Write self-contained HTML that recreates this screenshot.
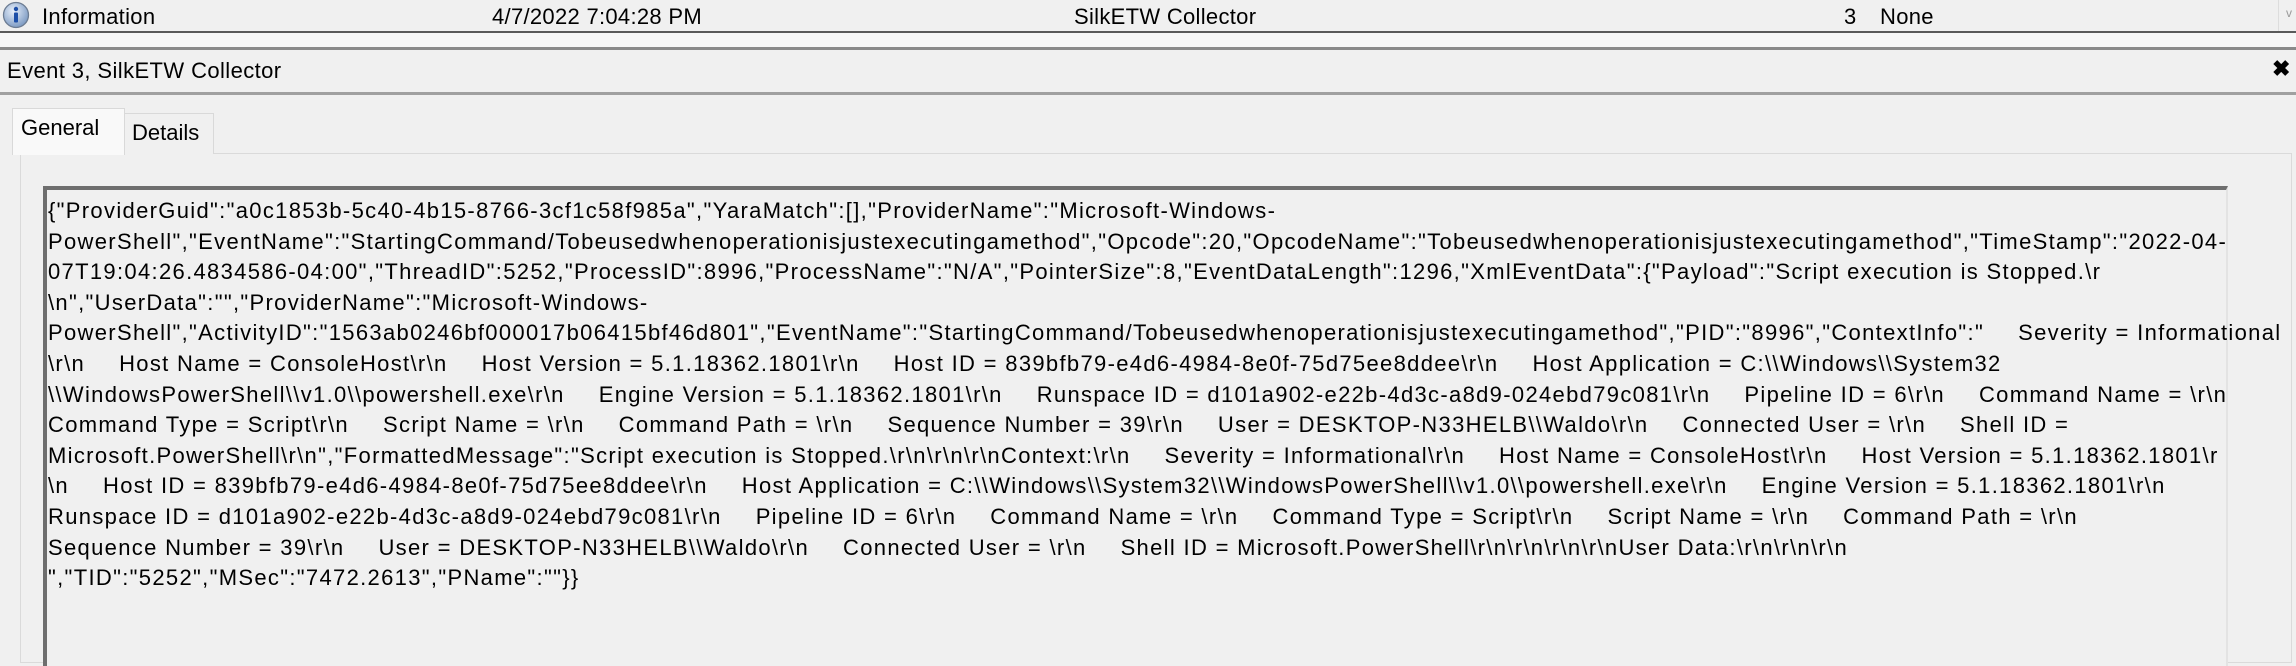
<!DOCTYPE html>
<html><head><meta charset="utf-8"><style>
*{margin:0;padding:0;box-sizing:border-box}
body{width:2296px;height:654px;overflow:hidden;background:#f0f0f0;font-family:"Liberation Sans",sans-serif;color:#000;position:relative}
.abs{position:absolute}
.row{left:0;top:0;width:2296px;height:32px;background:#f0f0f0}
.t{position:absolute;font-size:22px;white-space:nowrap;top:4px;letter-spacing:0.3px}
.txt{position:absolute;left:48px;top:196px;font-size:22px;line-height:30.6px;white-space:pre;letter-spacing:1.32px}
i{display:inline-block;width:34px}
</style></head><body>
<div class="abs row">
<svg class="abs" style="left:2px;top:1px" width="28" height="28" viewBox="0 0 28 28"><defs><radialGradient id="g" cx="40%" cy="35%" r="65%"><stop offset="0" stop-color="#e8f0fb"/><stop offset="1" stop-color="#7f9cc4"/></radialGradient></defs><circle cx="14" cy="14" r="12.5" fill="url(#g)" stroke="#6c7c92" stroke-width="1.3"/><circle cx="14" cy="8" r="2.2" fill="#1d4fa8"/><rect x="12" y="11.5" width="4" height="10" rx="1" fill="#1d4fa8"/></svg>
<div class="t" style="left:42px">Information</div>
<div class="t" style="left:492px">4/7/2022 7:04:28 PM</div>
<div class="t" style="left:1074px">SilkETW Collector</div>
<div class="t" style="left:1844px">3</div>
<div class="t" style="left:1880px">None</div>
<div class="abs" style="left:2278px;top:0;width:18px;height:32px;background:#f0f0f0;border-left:1px solid #ddd"></div>
<div class="abs" style="left:2286px;top:6px;font-size:12px;color:#999">v</div>
</div>
<div class="abs" style="left:0;top:31px;width:2296px;height:2px;background:#5a5a5a"></div>
<div class="abs" style="left:0;top:33px;width:2296px;height:14px;background:#f7f7f7"></div>
<div class="abs" style="left:0;top:47px;width:2296px;height:3px;background:#8a8a8a"></div>
<div class="abs" style="left:7px;top:58px;font-size:22px;letter-spacing:0.4px;white-space:nowrap">Event 3, SilkETW Collector</div>
<div class="abs" style="left:2272px;top:56px;font-size:22px;font-weight:bold">✖</div>
<div class="abs" style="left:0;top:92px;width:2296px;height:3px;background:#a0a0a0"></div>
<div class="abs" style="left:20px;top:153px;width:2272px;height:510px;border:1px solid #dadada;background:#f0f0f0"></div>
<div class="abs" style="left:124px;top:113px;width:90px;height:41px;border:1px solid #d9d9d9;border-bottom:none;background:#f0f0f0"></div>
<div class="abs" style="left:132px;top:120px;font-size:22px">Details</div>
<div class="abs" style="left:12px;top:108px;width:113px;height:47px;border:1px solid #d9d9d9;border-bottom:none;background:#f9f9f9"></div>
<div class="abs" style="left:21px;top:115px;font-size:22px">General</div>
<div class="abs" style="left:43px;top:186px;width:2185px;height:480px;border-top:4px solid #6e6e6e;border-left:4px solid #6e6e6e;border-right:2px solid #e3e3e3;background:#f0f0f0"></div>
<div class="txt">{"ProviderGuid":"a0c1853b-5c40-4b15-8766-3cf1c58f985a","YaraMatch":[],"ProviderName":"Microsoft-Windows-
PowerShell","EventName":"StartingCommand/Tobeusedwhenoperationisjustexecutingamethod","Opcode":20,"OpcodeName":"Tobeusedwhenoperationisjustexecutingamethod","TimeStamp":"2022-04-
07T19:04:26.4834586-04:00","ThreadID":5252,"ProcessID":8996,"ProcessName":"N/A","PointerSize":8,"EventDataLength":1296,"XmlEventData":{"Payload":"Script execution is Stopped.\r
\n","UserData":"","ProviderName":"Microsoft-Windows-
PowerShell","ActivityID":"1563ab0246bf000017b06415bf46d801","EventName":"StartingCommand/Tobeusedwhenoperationisjustexecutingamethod","PID":"8996","ContextInfo":"<i></i>Severity = Informational
\r\n<i></i>Host Name = ConsoleHost\r\n<i></i>Host Version = 5.1.18362.1801\r\n<i></i>Host ID = 839bfb79-e4d6-4984-8e0f-75d75ee8ddee\r\n<i></i>Host Application = C:\\Windows\\System32
\\WindowsPowerShell\\v1.0\\powershell.exe\r\n<i></i>Engine Version = 5.1.18362.1801\r\n<i></i>Runspace ID = d101a902-e22b-4d3c-a8d9-024ebd79c081\r\n<i></i>Pipeline ID = 6\r\n<i></i>Command Name = \r\n
Command Type = Script\r\n<i></i>Script Name = \r\n<i></i>Command Path = \r\n<i></i>Sequence Number = 39\r\n<i></i>User = DESKTOP-N33HELB\\Waldo\r\n<i></i>Connected User = \r\n<i></i>Shell ID =
Microsoft.PowerShell\r\n","FormattedMessage":"Script execution is Stopped.\r\n\r\n\r\nContext:\r\n<i></i>Severity = Informational\r\n<i></i>Host Name = ConsoleHost\r\n<i></i>Host Version = 5.1.18362.1801\r
\n<i></i>Host ID = 839bfb79-e4d6-4984-8e0f-75d75ee8ddee\r\n<i></i>Host Application = C:\\Windows\\System32\\WindowsPowerShell\\v1.0\\powershell.exe\r\n<i></i>Engine Version = 5.1.18362.1801\r\n
Runspace ID = d101a902-e22b-4d3c-a8d9-024ebd79c081\r\n<i></i>Pipeline ID = 6\r\n<i></i>Command Name = \r\n<i></i>Command Type = Script\r\n<i></i>Script Name = \r\n<i></i>Command Path = \r\n
Sequence Number = 39\r\n<i></i>User = DESKTOP-N33HELB\\Waldo\r\n<i></i>Connected User = \r\n<i></i>Shell ID = Microsoft.PowerShell\r\n\r\n\r\n\r\nUser Data:\r\n\r\n\r\n
","TID":"5252","MSec":"7472.2613","PName":""}}</div>
</body></html>
